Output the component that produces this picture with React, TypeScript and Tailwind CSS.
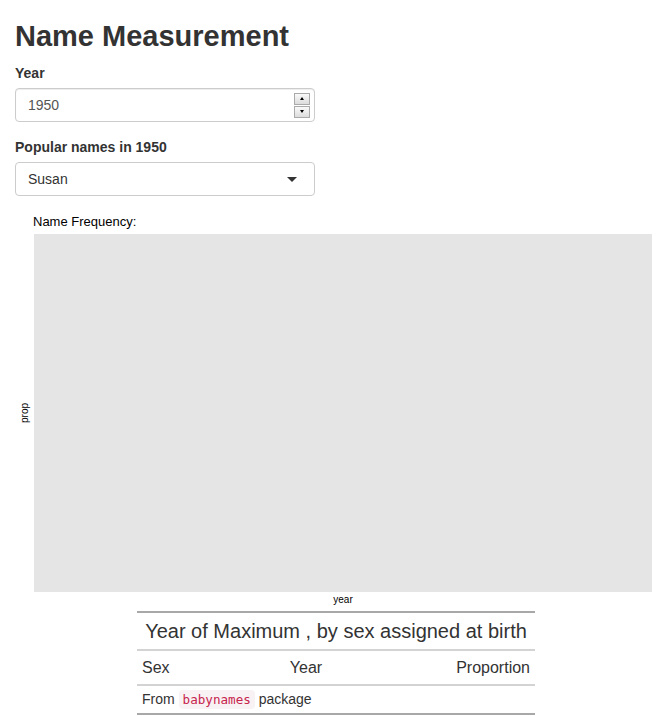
export default function App() {
  return (
    <div className="min-h-screen bg-white px-[15px] text-[#333] text-[14px] leading-[20px]" style={{ fontFamily: '"Liberation Sans", Arial, sans-serif' }}>
      <h2 className="mt-[20px] mb-[10px] text-[29px] leading-[33px] font-bold">Name Measurement</h2>

      {/* Year input */}
      <div className="mb-[15px] w-[300px]">
        <label className="block mb-[5px] font-bold">Year</label>
        <div className="flex h-[34px] items-center rounded-[4px] border border-[#ccc] pl-[12px] pr-[4px] shadow-[inset_0_1px_1px_rgba(0,0,0,0.075)]">
          <span className="flex-1 text-[#555]">1950</span>
          <div className="flex flex-col gap-[1px]">
            <div className="flex h-[12px] w-[16px] items-center justify-center border border-[#aaa] bg-gradient-to-b from-[#fafafa] to-[#dcdcdc]">
              <div className="h-0 w-0 border-x-[2px] border-b-[3px] border-x-transparent border-b-black" />
            </div>
            <div className="flex h-[12px] w-[16px] items-center justify-center border border-[#aaa] bg-gradient-to-b from-[#fafafa] to-[#dcdcdc]">
              <div className="h-0 w-0 border-x-[2px] border-t-[3px] border-x-transparent border-t-black" />
            </div>
          </div>
        </div>
      </div>

      {/* Names select */}
      <div className="mb-[15px] w-[300px]">
        <label className="block mb-[5px] font-bold">Popular names in 1950</label>
        <div className="flex h-[34px] items-center rounded-[4px] border border-[#ccc] pl-[12px] pr-[17px]">
          <span className="flex-1 text-[#333]">Susan</span>
          <div className="h-0 w-0 border-x-[5px] border-t-[5px] border-x-transparent border-t-[#333]" />
        </div>
      </div>

      {/* Plot */}
      <div className="grid h-[400px] grid-cols-[19px_1fr] grid-rows-[23px_1fr_19px] pr-[5px]">
        <div />
        <div className="flex items-end pb-[5px] -ml-[1px] text-[13px] leading-[15px] text-black">Name Frequency:</div>
        <div className="flex items-center justify-center">
          <span className="-rotate-90 text-[10px] leading-[12px] text-black">prop</span>
        </div>
        <div className="bg-[#e5e5e5]" />
        <div />
        <div className="text-center text-[10px] leading-[16px] text-black">year</div>
      </div>

      {/* Table */}
      <div className="mx-auto w-[398px] text-[#333]">
        <div className="border-t-2 border-[#a8a8a8] px-[5px] py-[6px] text-center text-[20px] leading-[24px]">
          Year of Maximum , by sex assigned at birth
        </div>
        <div className="grid grid-cols-[114px_100px_1fr] border-t-2 border-[#d3d3d3] px-[5px] py-[7px] text-[16px] leading-[19px]">
          <span>Sex</span>
          <span className="text-center">Year</span>
          <span className="text-right">Proportion</span>
        </div>
        <div className="border-y-2 border-t-[#d3d3d3] border-b-[#a8a8a8] px-[5px] py-[4px] text-[14px] leading-[19px]">
          From{" "}
          <code className="rounded-[4px] bg-[#f9f2f4] px-[4px] py-[2px] text-[12.6px] text-[#c7254e]" style={{ fontFamily: '"DejaVu Sans Mono", "Liberation Mono", monospace' }}>
            babynames
          </code>{" "}
          package
        </div>
      </div>
    </div>
  );
}
